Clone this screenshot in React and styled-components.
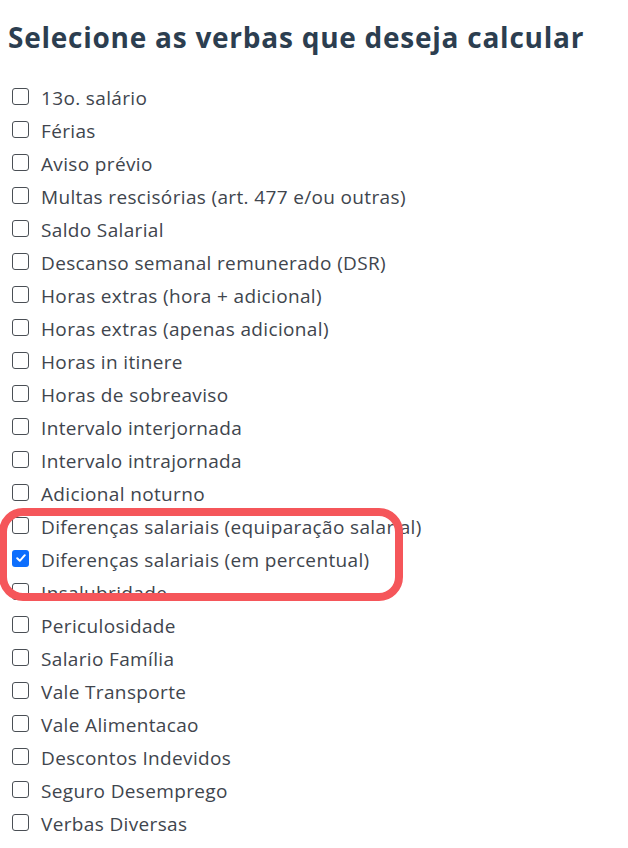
import React from "react";
import styled, { createGlobalStyle } from "styled-components";

const Global = createGlobalStyle`
  body {
    margin: 0;
    background: #ffffff;
    font-family: "Open Sans", Lato, sans-serif;
  }
`;

const verbas = [
  "13o. salário",
  "Férias",
  "Aviso prévio",
  "Multas rescisórias (art. 477 e/ou outras)",
  "Saldo Salarial",
  "Descanso semanal remunerado (DSR)",
  "Horas extras (hora + adicional)",
  "Horas extras (apenas adicional)",
  "Horas in itinere",
  "Horas de sobreaviso",
  "Intervalo interjornada",
  "Intervalo intrajornada",
  "Adicional noturno",
  "Diferenças salariais (equiparação salarial)",
  "Diferenças salariais (em percentual)",
  "Insalubridade",
  "Periculosidade",
  "Salario Família",
  "Vale Transporte",
  "Vale Alimentacao",
  "Descontos Indevidos",
  "Seguro Desemprego",
  "Verbas Diversas",
];

const App = () => {
  return (
    <Page>
      <Global />
      <Title>Selecione as verbas que deseja calcular</Title>
      <List>
        {verbas.map((v, i) => (
          <Row key={v}>
            <Box checked={i === 14}>
              {i === 14 && (
                <svg width="12" height="12" viewBox="0 0 12 12">
                  <path
                    d="M2.2 6.3 L4.8 8.8 L9.8 3.2"
                    fill="none"
                    stroke="#fff"
                    strokeWidth="2"
                    strokeLinecap="round"
                    strokeLinejoin="round"
                  />
                </svg>
              )}
            </Box>
            <Label>{v}</Label>
          </Row>
        ))}
        <Highlight />
      </List>
    </Page>
  );
};

export default App;

const Page = styled.div`
  padding: 16px 12px 0 12px;
`;

const Title = styled.h1`
  margin: 0 0 0 -4px;
  font-size: 28px;
  line-height: 42px;
  font-weight: 700;
  color: #2c3e50;
  letter-spacing: 0.75px;
`;

const List = styled.div`
  position: relative;
  margin-top: 23px;
  display: flex;
  flex-direction: column;
`;

const Row = styled.div`
  display: flex;
  align-items: center;
  height: 33px;
  gap: 12px;
`;

const Box = styled.div`
  width: 17px;
  height: 17px;
  box-sizing: border-box;
  border-radius: 3px;
  border: ${(p) => (p.checked ? "none" : "1.5px solid #4a4f55")};
  background: ${(p) => (p.checked ? "#0d6efd" : "#fff")};
  display: flex;
  align-items: center;
  justify-content: center;
  margin-top: -3px;
`;

const Label = styled.span`
  font-size: 19px;
  letter-spacing: 0.35px;
  color: #40454d;
`;

const Highlight = styled.div`
  position: absolute;
  left: -13px;
  top: 427px;
  width: 404px;
  height: 93px;
  box-sizing: border-box;
  border: 8px solid #f5565a;
  border-radius: 24px;
`;
